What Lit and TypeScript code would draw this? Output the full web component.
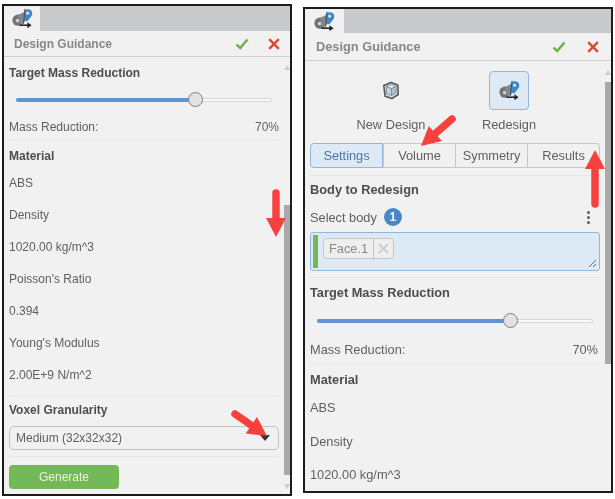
import { LitElement, html, css, svg } from "lit";
import { customElement } from "lit/decorators.js";

const redesignIcon = html`
  <svg class="act" width="21" height="21" viewBox="0 0 21 21">
    <circle cx="6" cy="12.2" r="5.6" fill="#6f7275" />
    <circle cx="5.6" cy="12.6" r="1.9" fill="#d0d0d0" />
    <path d="M6 7 L13 3.5 L15 12 L8 17 Z" fill="#85888b" />
    <path d="M12 3 C13.5 0.8 17.5 0.6 19.4 2.8 C20.8 4.6 20.4 7 19 8.8 L15.2 13.6 L11.2 11 Z" fill="#3f86c4" />
    <circle cx="15.6" cy="5.2" r="1.6" fill="#cfe0f0" />
    <path d="M13 0.8 L11.4 16" stroke="#3a4c5c" stroke-width=".9" fill="none" />
    <path d="M7.5 17.2 H17" stroke="#262626" stroke-width="1.6" fill="none" />
    <path d="M15.4 14.2 L19.6 17.2 L15.4 20.2 Z" fill="#262626" />
  </svg>
`;

const cubeIcon = html`
  <svg class="act" width="18" height="19" viewBox="0 0 20 21">
    <path d="M10 1.5 L17.5 4.5 L18 15 L11 19.5 L3.5 17 L2 5 Z" fill="#d5d8da" stroke="#55585b" stroke-width="1.8" stroke-linejoin="round" />
    <path d="M5 6 L10 4 L15.5 6 L10.5 8.5 Z" fill="#eceeef" stroke="#77797c" stroke-width=".8" />
    <path d="M10.5 8.5 L15.5 6 L15.5 13 L10.5 16 Z" fill="#a9c6de" stroke="#77797c" stroke-width=".8" />
    <path d="M5 6 L10.5 8.5 L10.5 16 L5 14 Z" fill="#c3d6e5" stroke="#77797c" stroke-width=".8" />
  </svg>
`;

const checkIcon = html`
  <svg class="act" width="14" height="12" viewBox="0 0 14 12">
    <path d="M1.5 6.5 L5.2 10 L12.5 1.5" fill="none" stroke="#66b044" stroke-width="2.4" />
  </svg>
`;

const closeIcon = html`
  <svg class="act" width="12" height="12" viewBox="0 0 12 12">
    <path d="M1.2 1.2 L10.8 10.8 M10.8 1.2 L1.2 10.8" fill="none" stroke="#dc4a33" stroke-width="2.4" />
  </svg>
`;

// red callouts pasted over the screenshot: tail x/y, tip x/y
const arrows = [
  [276, 193, 276, 237],
  [235, 414, 267, 436],
  [452, 119, 421, 146],
  [595, 204, 595, 150],
];

function arrowShape([x1, y1, x2, y2]: number[]) {
  const len = Math.hypot(x2 - x1, y2 - y1);
  const ux = (x2 - x1) / len;
  const uy = (y2 - y1) / len;
  const bx = x2 - ux * 19;
  const by = y2 - uy * 19;
  const head = `${x2},${y2} ${bx - uy * 10},${by + ux * 10} ${bx + uy * 10},${by - ux * 10}`;
  return svg`
    <line x1=${x1} y1=${y1} x2=${bx} y2=${by} stroke="#f8403f" stroke-width="7.5" stroke-linecap="round" />
    <polygon points=${head} fill="#f8403f" />
  `;
}

@customElement("app-root")
export class AppRoot extends LitElement {
  static styles = css`
    :host {
      display: block;
      position: relative;
      width: 615px;
      height: 499px;
      overflow: hidden;
      background: #fff;
      font-family: "Liberation Sans", Arial, sans-serif;
      color: #5f5f5f;
    }

    .page {
      display: flex;
      align-items: flex-start;
      padding-left: 2px;
      gap: 11px;
      filter: blur(0.4px);
    }

    .panel {
      box-sizing: border-box;
      display: flex;
      flex-direction: column;
      border: 2px solid #1c1c1c;
      background: #f1f1f1;
    }

    .panel.left {
      width: 290px;
      height: 492px;
      margin-top: 4px;
      font-size: 12px;
    }

    .panel.right {
      width: 310px;
      height: 486px;
      margin-top: 7px;
      font-size: 12.8px;
    }

    .tabstrip {
      display: flex;
      height: 25px;
      background: #c9cacc;
      flex-shrink: 0;
    }

    .right .tabstrip {
      height: 24px;
    }

    .tabstrip .tab {
      display: flex;
      align-items: center;
      justify-content: center;
      width: 36px;
      background: #f1f1f1;
    }

    .right .tabstrip .tab {
      width: 39px;
    }

    .head {
      display: flex;
      align-items: center;
      height: 25px;
      padding: 0 10px;
      border-bottom: 1px solid #cfcfcf;
      flex-shrink: 0;
      font-weight: 700;
      color: #85878a;
    }

    .right .head {
      height: 27px;
      padding: 0 12px 0 11px;
    }

    .head .title {
      flex: 1;
    }

    .head .act-wrap {
      display: flex;
      align-items: center;
      gap: 19px;
    }

    .right .head .act-wrap {
      gap: 21px;
    }

    .body {
      flex: 1;
      display: flex;
      min-height: 0;
    }

    .content {
      flex: 1;
      min-width: 0;
      overflow: hidden;
      padding: 8px 5px 0;
    }

    .right .content {
      padding-top: 10px;
    }

    .scroll {
      display: flex;
      flex-direction: column;
      align-items: center;
      width: 6px;
      flex-shrink: 0;
    }

    .scroll .up,
    .scroll .down {
      width: 0;
      height: 0;
      border-left: 3px solid transparent;
      border-right: 3px solid transparent;
    }

    .scroll .up {
      border-bottom: 5px solid #cdcdcd;
    }

    .scroll .down {
      border-top: 5px solid #cdcdcd;
    }

    .scroll .thumb {
      width: 100%;
      background: #a9a9a9;
    }

    .left .scroll .up {
      margin-top: 8px;
    }

    .left .scroll .thumb {
      height: 270px;
      margin-top: 135px;
    }

    .left .scroll .down {
      margin-top: 9px;
    }

    .right .scroll .up {
      margin-top: 9px;
    }

    .right .scroll .thumb {
      height: 282px;
      margin-top: 7px;
    }

    .heading {
      font-weight: 700;
      color: #4d4d4d;
      line-height: 16px;
    }

    .line {
      height: 32px;
      line-height: 32px;
    }

    .right .line {
      height: 33.5px;
      line-height: 33.5px;
    }

    .rule {
      border-top: 1px solid #e6e6e6;
    }

    .slider {
      position: relative;
      height: 4px;
      margin: 17px 7px 0;
      border-radius: 2px;
      background: #fafafa;
      box-shadow: inset 0 0 0 1px #d6d6d6;
    }

    .right .slider {
      margin-top: 18px;
    }

    .slider .fill {
      height: 100%;
      border-radius: 2px;
      background: #5b96d3;
    }

    .slider .knob {
      position: absolute;
      top: -6px;
      width: 15px;
      height: 15px;
      margin-left: -7.5px;
      box-sizing: border-box;
      border: 1px solid #808080;
      border-radius: 50%;
      background: #e2e2e2;
    }

    .readout {
      display: flex;
      justify-content: space-between;
      margin-top: 16px;
      line-height: 18px;
    }

    .right .readout {
      margin-top: 18px;
      padding-right: 2px;
    }

    .select {
      display: flex;
      align-items: center;
      justify-content: space-between;
      box-sizing: border-box;
      height: 24px;
      padding: 0 8px 0 6px;
      border: 1px solid #c4c4c4;
      border-radius: 5px;
    }

    .select .caret {
      width: 0;
      height: 0;
      border-left: 5px solid transparent;
      border-right: 5px solid transparent;
      border-top: 6px solid #333;
    }

    .generate {
      display: flex;
      align-items: center;
      justify-content: center;
      width: 110px;
      height: 24px;
      margin-top: 8px;
      border-radius: 4px;
      background: #74b857;
      color: #e8f3e2;
    }

    .modes {
      display: flex;
      gap: 44px;
      margin-left: 44px;
    }

    .mode {
      display: flex;
      flex-direction: column;
      align-items: center;
      width: 74px;
      gap: 7px;
    }

    .mode .tile {
      display: flex;
      align-items: center;
      justify-content: center;
      box-sizing: border-box;
      width: 40px;
      height: 39px;
      border: 1px solid transparent;
      border-radius: 4px;
    }

    .mode.on .tile {
      border-color: #8fb8de;
      background: #dde9f4;
    }

    .mode span {
      white-space: nowrap;
    }

    .segments {
      display: flex;
      height: 25px;
      margin-top: 11px;
      border: 1px solid #c8c8c8;
      border-radius: 4px;
      box-sizing: border-box;
    }

    .segments .seg {
      flex: 1;
      display: flex;
      align-items: center;
      justify-content: center;
      border-left: 1px solid #c8c8c8;
    }

    .segments .seg:first-child {
      margin: -1px 0 -1px -1px;
      border: 1px solid #8fb8de;
      border-radius: 4px 0 0 4px;
      background: #dde9f4;
      color: #4a78a8;
    }

    .select-row {
      display: flex;
      align-items: center;
      gap: 7px;
      height: 18px;
      margin-top: 10px;
    }

    .badge {
      width: 18px;
      height: 18px;
      border-radius: 50%;
      background: #4a86c8;
      color: #f4f8fc;
      font-size: 12px;
      font-weight: 700;
      line-height: 18px;
      text-align: center;
    }

    .kebab {
      margin-left: auto;
      margin-right: 10px;
      display: flex;
      flex-direction: column;
      gap: 2px;
    }

    .kebab i {
      display: block;
      width: 3px;
      height: 3px;
      border-radius: 50%;
      background: #5c5c5c;
    }

    .picker {
      position: relative;
      display: flex;
      align-items: flex-start;
      box-sizing: border-box;
      height: 39px;
      margin-top: 6px;
      padding: 2px;
      border: 1px solid #8fb8de;
      border-radius: 3px;
      background: #dde9f4;
    }

    .picker .bar {
      width: 5px;
      height: 33px;
      background: #74b857;
    }

    .chip {
      display: flex;
      align-items: center;
      height: 19px;
      margin: 3px 0 0 5px;
      border: 1px solid #c6c6c6;
      border-radius: 4px;
      background: #eeeeee;
      color: #8a8a8a;
    }

    .chip .name {
      padding: 0 5px;
      line-height: 19px;
    }

    .chip .x {
      display: flex;
      align-items: center;
      justify-content: center;
      width: 19px;
      height: 19px;
      border-left: 1px solid #c6c6c6;
    }

    .picker .grip {
      position: absolute;
      right: 2px;
      bottom: 2px;
    }

    .arrows {
      position: absolute;
      left: 0;
      top: 0;
      pointer-events: none;
      filter: blur(0.4px);
    }

    .act {
      display: block;
    }
  `;

  private _head() {
    return html`
      <div class="tabstrip"><div class="tab">${redesignIcon}</div></div>
      <div class="head">
        <span class="title">Design Guidance</span>
        <span class="act-wrap">${checkIcon}${closeIcon}</span>
      </div>
    `;
  }

  private _mass() {
    return html`
      <div class="heading">Target Mass Reduction</div>
      <div class="slider">
        <div class="fill" style="width: 70%"></div>
        <div class="knob" style="left: 70%"></div>
      </div>
      <div class="readout"><span>Mass Reduction:</span><span>70%</span></div>
    `;
  }

  private _scroll(withDown: boolean) {
    return html`
      <div class="scroll">
        <div class="up"></div>
        <div class="thumb"></div>
        ${withDown ? html`<div class="down"></div>` : ""}
      </div>
    `;
  }

  render() {
    return html`
      <div class="page">
        <section class="panel left">
          ${this._head()}
          <div class="body">
            <div class="content">
              ${this._mass()}
              <div class="rule" style="margin-top: 4px"></div>
              <div class="heading" style="margin: 7px 0 3px">Material</div>
              ${["ABS", "Density", "1020.00 kg/m^3", "Poisson's Ratio", "0.394", "Young's Modulus", "2.00E+9 N/m^2"].map(
                (t) => html`<div class="line">${t}</div>`
              )}
              <div class="rule" style="margin-top: 4px"></div>
              <div class="heading" style="margin-top: 6px">Voxel Granularity</div>
              <div class="select" style="margin-top: 8px">
                <span>Medium (32x32x32)</span><span class="caret"></span>
              </div>
              <div class="rule" style="margin-top: 6px"></div>
              <div class="generate">Generate</div>
            </div>
            ${this._scroll(true)}
          </div>
        </section>

        <section class="panel right">
          ${this._head()}
          <div class="body">
            <div class="content">
              <div class="modes">
                <div class="mode">
                  <div class="tile">${cubeIcon}</div>
                  <span>New Design</span>
                </div>
                <div class="mode on">
                  <div class="tile">${redesignIcon}</div>
                  <span>Redesign</span>
                </div>
              </div>
              <div class="segments">
                <div class="seg">Settings</div>
                <div class="seg">Volume</div>
                <div class="seg">Symmetry</div>
                <div class="seg">Results</div>
              </div>
              <div class="rule" style="margin-top: 7px"></div>
              <div class="heading" style="margin-top: 6px">Body to Redesign</div>
              <div class="select-row">
                <span>Select body</span><span class="badge">1</span>
                <span class="kebab"><i></i><i></i><i></i></span>
              </div>
              <div class="picker">
                <div class="bar"></div>
                <div class="chip">
                  <span class="name">Face.1</span>
                  <span class="x">
                    <svg width="11" height="11" viewBox="0 0 11 11">
                      <path d="M1 1 L10 10 M10 1 L1 10" stroke="#c4c4c4" stroke-width="1.5" />
                    </svg>
                  </span>
                </div>
                <svg class="grip" width="9" height="9" viewBox="0 0 9 9">
                  <path d="M1 8 L8 1 M5 8 L8 5" stroke="#6a6a6a" stroke-width="1" />
                </svg>
              </div>
              <div class="rule" style="margin-top: 6px"></div>
              <div style="height: 7px"></div>
              ${this._mass()}
              <div class="rule" style="margin-top: 5px"></div>
              <div class="heading" style="margin: 7px 0 3px">Material</div>
              ${["ABS", "Density", "1020.00 kg/m^3"].map((t) => html`<div class="line">${t}</div>`)}
            </div>
            ${this._scroll(false)}
          </div>
        </section>
      </div>
      <svg class="arrows" width="615" height="499">${arrows.map(arrowShape)}</svg>
    `;
  }
}
